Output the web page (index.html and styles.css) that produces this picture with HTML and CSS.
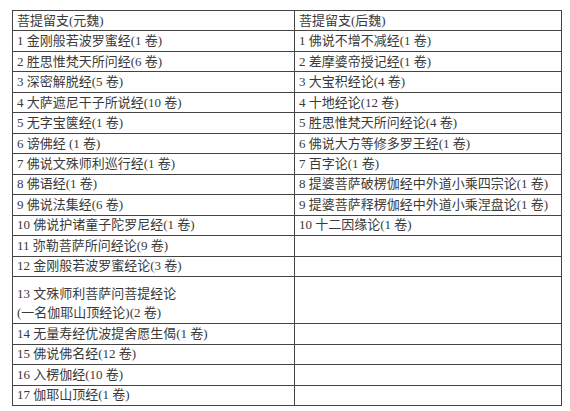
FILE: index.html
```html
<!DOCTYPE html>
<html lang="zh">
<head>
<meta charset="utf-8">
<link rel="stylesheet" href="styles.css">
</head>
<body>
<table class="sutras">
  <colgroup><col class="c-left"><col class="c-right"></colgroup>
  <tr><td>菩提留支(元魏)</td><td>菩提留支(后魏)</td></tr>
  <tr><td>1 金刚般若波罗蜜经(1 卷)</td><td>1 佛说不增不减经(1 卷)</td></tr>
  <tr><td>2 胜思惟梵天所问经(6 卷)</td><td>2 差摩婆帝授记经(1 卷)</td></tr>
  <tr><td>3 深密解脱经(5 卷)</td><td>3 大宝积经论(4 卷)</td></tr>
  <tr><td>4 大萨遮尼干子所说经(10 卷)</td><td>4 十地经论(12 卷)</td></tr>
  <tr><td>5 无字宝箧经(1 卷)</td><td>5 胜思惟梵天所问经论(4 卷)</td></tr>
  <tr><td>6 谤佛经 (1 卷)</td><td>6 佛说大方等修多罗王经(1 卷)</td></tr>
  <tr><td>7 佛说文殊师利巡行经(1 卷)</td><td>7 百字论(1 卷)</td></tr>
  <tr><td>8 佛语经(1 卷)</td><td>8 提婆菩萨破楞伽经中外道小乘四宗论(1 卷)</td></tr>
  <tr><td>9 佛说法集经(6 卷)</td><td>9 提婆菩萨释楞伽经中外道小乘涅盘论(1 卷)</td></tr>
  <tr><td>10 佛说护诸童子陀罗尼经(1 卷)</td><td>10 十二因缘论(1 卷)</td></tr>
  <tr><td>11 弥勒菩萨所问经论(9 卷)</td><td></td></tr>
  <tr><td>12 金刚般若波罗蜜经论(3 卷)</td><td></td></tr>
  <tr class="double"><td>13 文殊师利菩萨问菩提经论<br>(一名伽耶山顶经论)(2 卷)</td><td></td></tr>
  <tr><td>14 无量寿经优波提舍愿生偈(1 卷)</td><td></td></tr>
  <tr><td>15 佛说佛名经(12 卷)</td><td></td></tr>
  <tr><td>16 入楞伽经(10 卷)</td><td></td></tr>
  <tr><td>17 伽耶山顶经(1 卷)</td><td></td></tr>
</table>
</body>
</html>
```

FILE: styles.css
```css
html, body {
  margin: 0;
  padding: 0;
  background: #ffffff;
}
body {
  padding: 10px 0 0 12px;
  font-family: "Liberation Serif", "Noto Sans CJK SC", serif;
  color: #3a3a3a;
}
.sutras {
  border-collapse: collapse;
  table-layout: fixed;
  width: 549px;
  font-size: 13px;
}
.c-left { width: 282px; }
.c-right { width: 267px; }
.sutras td {
  border: 1px solid #444;
  height: 20.47px;
  padding: 0 0 0 4px;
  line-height: 16px;
  vertical-align: middle;
  white-space: nowrap;
  box-sizing: border-box;
}
.sutras tr.double td {
  height: 47px;
  line-height: 19px;
  padding-top: 5px;
}
```
